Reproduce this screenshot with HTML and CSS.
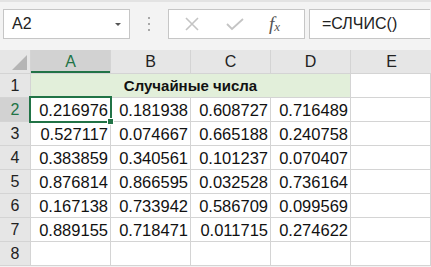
FILE: index.html
```html
<!DOCTYPE html>
<html lang="ru">
<head>
    <meta charset="UTF-8">
    <title>Случайные числа</title>
    <link rel="stylesheet" href="styles.css">
</head>
<body>
    <div class="toolbar">
        <div class="name-box">
            <span>A2</span>
            <span class="caret"></span>
        </div>
        <div class="grip"><i></i><i></i><i></i></div>
        <div class="fx-buttons">
            <svg class="btn-icon" width="16" height="16" viewBox="0 0 16 16">
                <path d="M2 2 L14 14 M14 2 L2 14" stroke="#c4c4c4" stroke-width="1.6" fill="none"/>
            </svg>
            <svg class="btn-icon" width="18" height="16" viewBox="0 0 18 16">
                <path d="M1 8 L6 13 L17 3" stroke="#c4c4c4" stroke-width="1.8" fill="none"/>
            </svg>
            <span class="fx">f<sub>x</sub></span>
        </div>
        <div class="formula">=СЛЧИС()</div>
    </div>

    <div class="sheet">
        <div class="corner"><span class="tri"></span></div>
        <div class="col-head selected">A</div>
        <div class="col-head">B</div>
        <div class="col-head">C</div>
        <div class="col-head">D</div>
        <div class="col-head">E</div>

        <div class="row-head">1</div>
        <div class="cell title">Случайные числа</div>
        <div class="cell"></div>

        <div class="row-head selected">2</div>
        <div class="cell num active">0.216976</div>
        <div class="cell num">0.181938</div>
        <div class="cell num">0.608727</div>
        <div class="cell num">0.716489</div>
        <div class="cell"></div>

        <div class="row-head">3</div>
        <div class="cell num">0.527117</div>
        <div class="cell num">0.074667</div>
        <div class="cell num">0.665188</div>
        <div class="cell num">0.240758</div>
        <div class="cell"></div>

        <div class="row-head">4</div>
        <div class="cell num">0.383859</div>
        <div class="cell num">0.340561</div>
        <div class="cell num">0.101237</div>
        <div class="cell num">0.070407</div>
        <div class="cell"></div>

        <div class="row-head">5</div>
        <div class="cell num">0.876814</div>
        <div class="cell num">0.866595</div>
        <div class="cell num">0.032528</div>
        <div class="cell num">0.736164</div>
        <div class="cell"></div>

        <div class="row-head">6</div>
        <div class="cell num">0.167138</div>
        <div class="cell num">0.733942</div>
        <div class="cell num">0.586709</div>
        <div class="cell num">0.099569</div>
        <div class="cell"></div>

        <div class="row-head">7</div>
        <div class="cell num">0.889155</div>
        <div class="cell num">0.718471</div>
        <div class="cell num">0.011715</div>
        <div class="cell num">0.274622</div>
        <div class="cell"></div>

        <div class="row-head">8</div>
        <div class="cell"></div>
        <div class="cell"></div>
        <div class="cell"></div>
        <div class="cell"></div>
        <div class="cell"></div>
    </div>
</body>
</html>
```

FILE: styles.css
```css
body {
    margin: 0;
    width: 431px;
    height: 267px;
    overflow: hidden;
    background-color: #f3f3f3;
    font-family: "Liberation Sans", Arial, sans-serif;
}

/* formula bar */
.toolbar {
    height: 50px;
    box-sizing: border-box;
    padding: 7px 0 0 3px;
    border-top: 2px solid #e3e3e3;
    display: flex;
    align-items: flex-start;
}

.name-box {
    width: 127px;
    height: 30px;
    box-sizing: border-box;
    background-color: white;
    border: 1px solid #c6c6c6;
    display: flex;
    align-items: center;
    justify-content: space-between;
    padding: 0 8px 0 8px;
    font-size: 16px;
    color: #222;
}

.caret {
    width: 0;
    height: 0;
    border-left: 3px solid transparent;
    border-right: 3px solid transparent;
    border-top: 3px solid #555;
    margin-top: 1px;
}

.grip {
    width: 38px;
    height: 30px;
    display: flex;
    flex-direction: column;
    align-items: center;
    justify-content: center;
    gap: 4px;
}

.grip i {
    width: 2px;
    height: 2px;
    background-color: #a8a8a8;
}

.fx-buttons {
    width: 137px;
    height: 30px;
    box-sizing: border-box;
    background-color: white;
    border: 1px solid #c6c6c6;
    display: flex;
    align-items: center;
    padding-left: 15px;
    gap: 26px;
}

.fx {
    font-family: "Liberation Serif", serif;
    font-style: italic;
    font-size: 19px;
    color: #555;
    margin-left: -1px;
}

.fx sub {
    font-size: 13px;
    vertical-align: -1px;
}

.formula {
    margin-left: 4px;
    width: 121px;
    height: 30px;
    box-sizing: border-box;
    background-color: white;
    border: 1px solid #c6c6c6;
    border-right: none;
    padding-left: 12px;
    line-height: 28px;
    font-size: 16px;
    color: #222;
}

/* sheet grid */
.sheet {
    display: grid;
    grid-template-columns: 30px repeat(5, 79px) 1px;
    grid-template-rows: 23px repeat(8, 23px);
    gap: 1px;
    background-color: #d4d4d4;
    width: 431px;
    padding-bottom: 1px;
}

.corner {
    background-color: #e6e6e6;
    position: relative;
}

.tri {
    position: absolute;
    right: 3px;
    bottom: 3px;
    width: 15px;
    height: 15px;
    background-color: #b5b5b5;
    clip-path: polygon(100% 0, 100% 100%, 0 100%);
}

.col-head {
    background-color: #e6e6e6;
    text-align: center;
    line-height: 24px;
    font-size: 16px;
    color: #222;
}

.col-head.selected {
    background-color: #d2d2d2;
    color: #217346;
    box-shadow: inset 0 -2px 0 #217346;
}

.col-head:nth-child(6) {
    grid-column: 6 / 8;
}

.row-head {
    grid-column: 1;
    background-color: #e6e6e6;
    text-align: center;
    line-height: 24px;
    font-size: 16px;
    color: #222;
}

.row-head.selected {
    background-color: #d2d2d2;
    color: #217346;
}

.cell {
    background-color: white;
    font-size: 16.5px;
    line-height: 24px;
    color: #111;
    white-space: nowrap;
}

.cell.num {
    text-align: right;
    padding-right: 2px;
}

.cell.title {
    grid-column: span 4;
    background-color: #e2efda;
    font-weight: bold;
    font-size: 15px;
    text-align: center;
}

.cell.active {
    position: relative;
    outline: 2px solid #217346;
}

.cell.active::after {
    content: "";
    position: absolute;
    right: -4px;
    bottom: -4px;
    width: 5px;
    height: 5px;
    background-color: #217346;
    border: 1px solid white;
}
```
